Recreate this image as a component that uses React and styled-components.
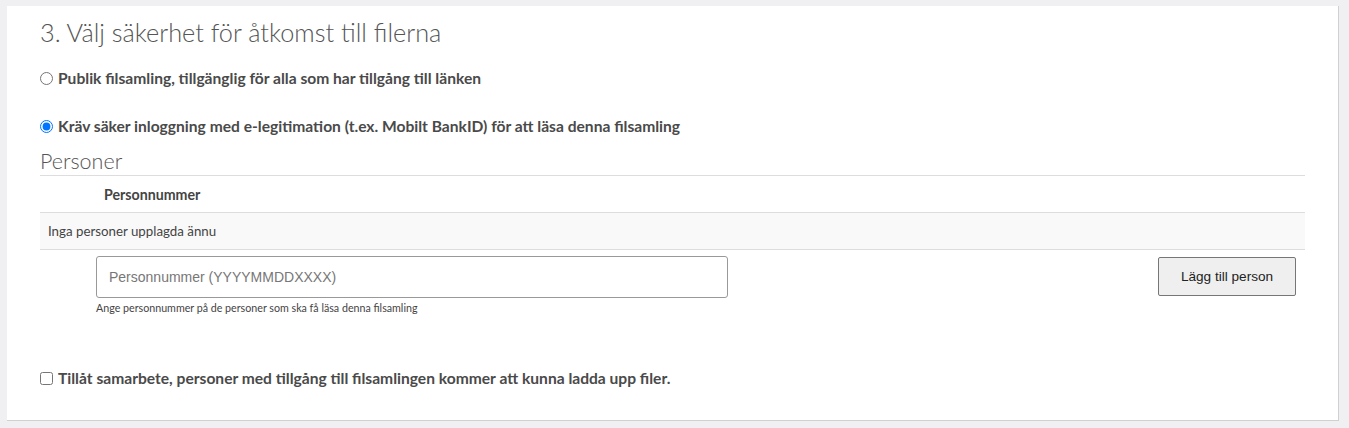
import React from "react";
import styled, { createGlobalStyle } from "styled-components";

const Global = createGlobalStyle`
  html, body { margin: 0; padding: 0; background: #f0f0f2; }
  body { font-family: Lato, "Liberation Sans", sans-serif; }
`;

const Page = styled.div`
  padding: 6px 10px 9px 7px;
`;

const Panel = styled.section`
  background: #fff;
  border-right: 1px solid #d0d0d0;
  border-bottom: 1px solid #d0d0d0;
  padding: 11px 33px 32px 33px;
`;

const Title = styled.h2`
  margin: 0;
  font-family: Lato, sans-serif;
  font-weight: 300;
  font-size: 25.3px;
  line-height: 30px;
  color: #555;
`;

const OptionRow = styled.label`
  display: flex;
  align-items: center;
  gap: 5px;
  height: 20px;
  margin-top: ${(p) => p.$mt}px;
  font-family: Lato, sans-serif;
  font-weight: 700;
  font-size: 15.6px;
  color: #4a4a4a;
  input { margin: 0; width: 13px; height: 13px; }
`;

const SubTitle = styled.h3`
  margin: 13px 0 0;
  font-family: Lato, sans-serif;
  font-weight: 300;
  font-size: 21.5px;
  line-height: 24px;
  padding-bottom: 2px;
  color: #555;
`;

const Table = styled.table`
  width: 100%;
  border-collapse: collapse;
  font-family: Lato, sans-serif;
  color: #444;
`;

const Th = styled.th`
  text-align: left;
  font-weight: 700;
  font-size: 14.2px;
  height: 36px;
  padding: 0 8px;
  border-top: 1px solid #ddd;
  border-bottom: 1px solid #ddd;
  width: ${(p) => p.$w || "auto"};
`;

const Td = styled.td`
  height: 36px;
  padding: 0 8px;
  font-size: 13.3px;
  background: #f9f9f9;
  border-bottom: 1px solid #ddd;
`;

const FormRow = styled.div`
  display: flex;
  align-items: flex-start;
  justify-content: space-between;
  padding: 6px 9px 0 56px;
`;

const Field = styled.div`
  display: flex;
  flex-direction: column;
`;

const Input = styled.input`
  box-sizing: border-box;
  width: 632px;
  height: 42px;
  border: 1px solid #999;
  border-radius: 3px;
  padding: 0 12px;
  font-family: "Liberation Sans", Arial, sans-serif;
  font-size: 14px;
  color: #555;
  outline: none;
  &::placeholder { color: #777; }
`;

const Help = styled.span`
  margin-top: 3px;
  font-family: Lato, sans-serif;
  font-size: 10.7px;
  color: #444;
`;

const Button = styled.button`
  box-sizing: border-box;
  margin-top: 1px;
  width: 138px;
  height: 39px;
  background: #efefef;
  border: 1px solid #767676;
  border-radius: 2px;
  font-family: "Liberation Sans", Arial, sans-serif;
  font-size: 13.6px;
  color: #222;
`;

export default function App() {
  return (
    <>
      <Global />
      <Page>
        <Panel>
          <Title>3. Välj säkerhet för åtkomst till filerna</Title>
          <OptionRow $mt={21}>
            <input type="radio" name="sec" />
            Publik filsamling, tillgänglig för alla som har tillgång till länken
          </OptionRow>
          <OptionRow $mt={28}>
            <input type="radio" name="sec" defaultChecked />
            Kräv säker inloggning med e-legitimation (t.ex. Mobilt BankID) för att läsa denna filsamling
          </OptionRow>
          <SubTitle>Personer</SubTitle>
          <Table>
            <thead>
              <tr>
                <Th $w="40px"></Th>
                <Th>Personnummer</Th>
              </tr>
            </thead>
            <tbody>
              <tr>
                <Td colSpan={2}>Inga personer upplagda ännu</Td>
              </tr>
            </tbody>
          </Table>
          <FormRow>
            <Field>
              <Input placeholder="Personnummer (YYYYMMDDXXXX)" />
              <Help>Ange personnummer på de personer som ska få läsa denna filsamling</Help>
            </Field>
            <Button>Lägg till person</Button>
          </FormRow>
          <OptionRow $mt={54}>
            <input type="checkbox" />
            Tillåt samarbete, personer med tillgång till filsamlingen kommer att kunna ladda upp filer.
          </OptionRow>
        </Panel>
      </Page>
    </>
  );
}
